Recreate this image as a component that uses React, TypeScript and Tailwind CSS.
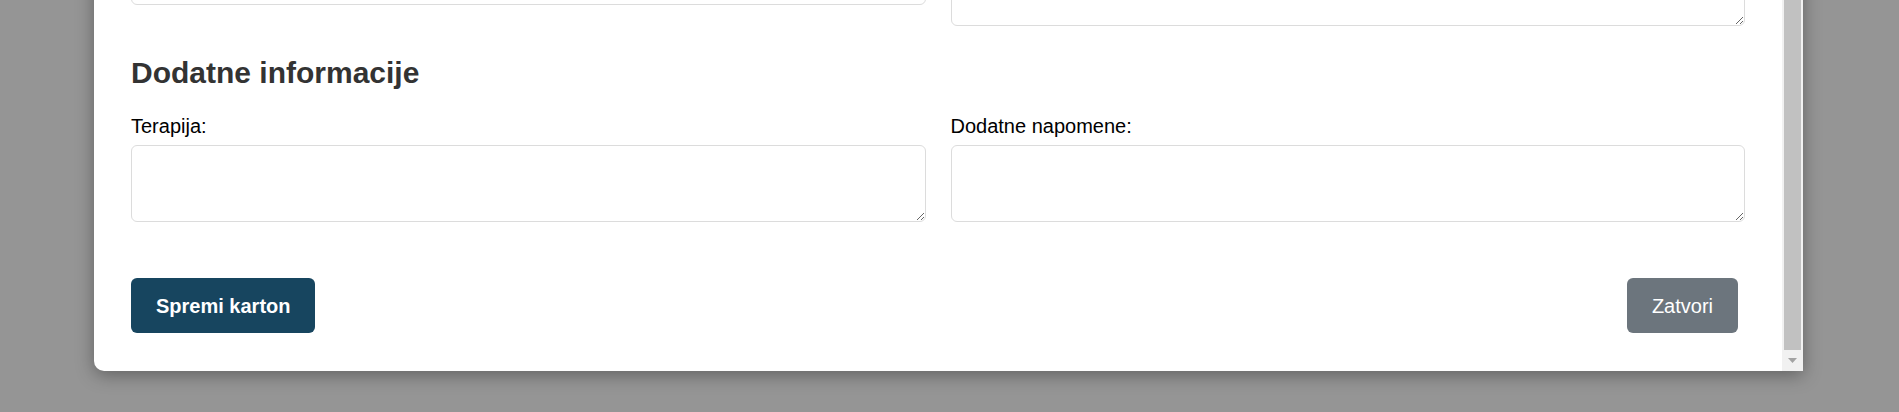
import React from 'react';

interface FieldProps {
    label: string;
}

const TextField: React.FC<FieldProps> = ({ label }) => (
    <div>
        <label className="mb-[6px] block text-[20px] leading-[25px] text-black">{label}</label>
        <textarea className="block h-[77px] w-full rounded-[6px] border border-[#dcdcdc] bg-white px-[15px] py-[8px] text-[20px] outline-none" />
    </div>
);

const Scrollbar: React.FC = () => (
    <div className="flex w-[21px] flex-col bg-[#f1f1f1]">
        <div className="mx-[2px] flex-1 bg-[#c1c1c1]" />
        <div className="flex h-[21px] items-center justify-center">
            <svg width="9" height="5" viewBox="0 0 9 5">
                <polygon points="0,0 9,0 4.5,5" fill="#a3a3a3" />
            </svg>
        </div>
    </div>
);

export default function App() {
    return (
        <div className="h-[412px] w-full overflow-hidden bg-[#959595] font-['Liberation_Sans',Arial,sans-serif]">
            <div className="ml-[94px] mt-[-80px] flex w-[1709px] rounded-bl-[10px] bg-white shadow-[0_4px_18px_rgba(0,0,0,0.35)]">
                <div className="flex-1 px-[37px] pb-[38px] pt-[29px]">
                    {/* previous section, mostly scrolled out of view */}
                    <div className="grid grid-cols-2 items-start gap-x-[25px]">
                        <div className="h-[56px] rounded-[6px] border border-[#dcdcdc]" />
                        <textarea className="block h-[77px] w-full rounded-[6px] border border-[#dcdcdc] bg-white outline-none" />
                    </div>

                    <h3 className="mt-[29px] text-[30px] font-bold leading-[36px] text-[#333333]">
                        Dodatne informacije
                    </h3>

                    <div className="mt-[23px] grid grid-cols-2 gap-x-[25px]">
                        <TextField label="Terapija:" />
                        <TextField label="Dodatne napomene:" />
                    </div>

                    <div className="mt-[56px] flex items-center justify-between">
                        <button className="h-[55px] rounded-[6px] bg-[#17455f] px-[25px] text-[20px] font-bold text-white">
                            Spremi karton
                        </button>
                        <button className="mr-[7px] h-[55px] rounded-[6px] bg-[#6c757d] px-[25px] text-[20px] text-white">
                            Zatvori
                        </button>
                    </div>
                </div>
                <Scrollbar />
            </div>
        </div>
    );
}
